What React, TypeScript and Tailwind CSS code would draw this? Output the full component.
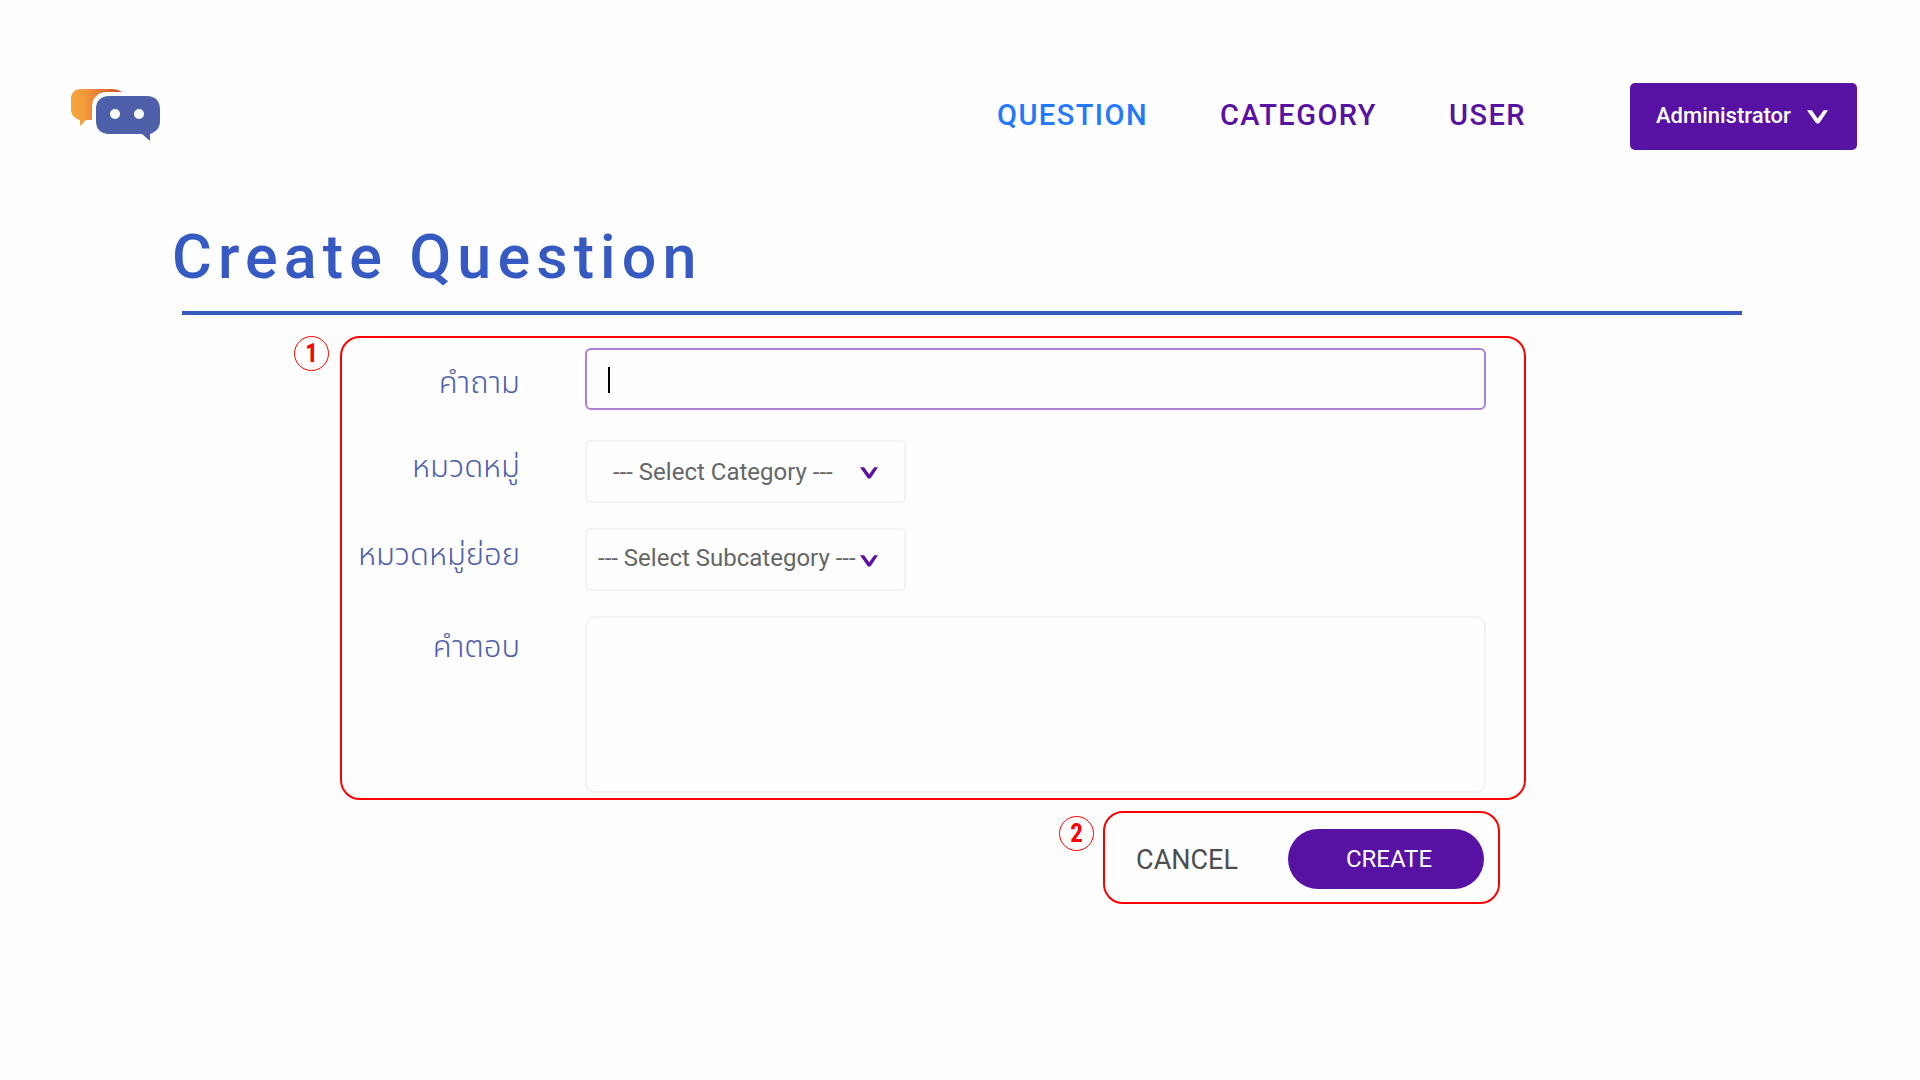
import type { ReactNode } from 'react';

function Logo() {
  return (
    <svg viewBox="0 0 90 54" className="h-[54px] w-[90px]" role="img" aria-label="Chatbot">
      <defs>
        <linearGradient id="bubble" x1="0" x2="1" y1="0" y2="0">
          <stop offset="0" stopColor="#f8a53c" />
          <stop offset="0.25" stopColor="#f39c3b" />
          <stop offset="0.75" stopColor="#e0682f" />
          <stop offset="1" stopColor="#d4502c" />
        </linearGradient>
      </defs>
      <path
        fill="url(#bubble)"
        d="M10 0H41C45 0 48 1 51 3H36C27 3 21 9 21 18V31H15L9 37V31C3 29 0 26 0 20V10C0 4 4 0 10 0Z"
      />
      <path
        fill="#4f60ab"
        d="M38 7H76C84 7 89 12 89 20V32C89 39 85 43 79 45V52L71 45H38C30 45 25 40 25 32V20C25 12 30 7 38 7Z"
      />
      <circle cx="44" cy="25" r="5" fill="#fff" />
      <circle cx="68" cy="25" r="5" fill="#fff" />
    </svg>
  );
}

function Chevron({ className }: { className: string }) {
  return (
    <svg viewBox="0 0 20 13" className={className} fill="currentColor" aria-hidden="true">
      <path d="M0 0H4.6L10.2 8L15.8 0H20L12.2 11.8Q10.2 14 8.2 11.8Z" />
    </svg>
  );
}

function Badge({ children }: { children: ReactNode }) {
  return (
    <span className="flex size-[35px] shrink-0 items-center justify-center rounded-full border border-[#ff0000] font-['Roboto_Condensed',Roboto,sans-serif] text-[25px] leading-none font-bold text-[#ff0000]">
      {children}
    </span>
  );
}

const label =
  "w-[178px] shrink-0 text-right font-['Noto_Sans_Thai','Noto_Sans',sans-serif] text-[31px] leading-10 font-light whitespace-nowrap text-[#4f60ab]";

function Select({ id, text, pad }: { id: string; text: string; pad: string }) {
  return (
    <div className="relative w-[321px]">
      <select
        id={id}
        className={`h-[63px] w-full appearance-none rounded-[5px] border-2 border-[#f2f2f2] bg-transparent text-[24px] text-[#666] ${pad}`}
      >
        <option>{text}</option>
      </select>
      <Chevron className="pointer-events-none absolute top-[27px] right-7 h-3 w-[18px] text-[#5712a3]" />
    </div>
  );
}

export default function App() {
  return (
    <div className="min-h-screen bg-[#fefefe] font-[Roboto,sans-serif]">
      <header className="flex items-start pt-[83px] pr-[63px] pl-[71px]">
        <a href="#" className="pt-1.5">
          <Logo />
        </a>
        <nav className="ml-auto flex gap-[72px] pt-3 text-[29px] leading-10 font-medium tracking-wider text-[#5712a3]">
          <a href="#question" className="text-[#2378fb]">QUESTION</a>
          <a href="#category">CATEGORY</a>
          <a href="#user">USER</a>
        </nav>
        <button className="ml-[104px] flex h-[67px] w-[227px] items-center rounded-[5px] bg-[#5712a3] pb-0.5 pl-[26px] text-[22px] font-medium text-white">
          Administrator
          <Chevron className="mt-0.5 ml-4 h-[14px] w-[21px]" />
        </button>
      </header>

      <main className="pt-[67px] pr-[178px] pl-[182px]">
        <h1 className="-ml-2.5 text-[61px] leading-20 font-medium tracking-widest text-[#375ac2]">
          Create Question
        </h1>
        <div className="mt-3.5 h-1 bg-[#375ac2]" />

        <form className="mt-[21px] mr-[216px] ml-[112px]">
          <div className="flex items-start gap-[11px]">
            <Badge>1</Badge>
            <div className="flex min-w-0 flex-1 flex-col rounded-[20px] border-2 border-[#ff0000] pt-2.5 pr-[38px] pb-[5px]">
              <div className="flex items-start gap-[65px]">
                <label htmlFor="question" className={`${label} pt-4`}>คำถาม</label>
                <div className="relative flex-1">
                  <input
                    id="question"
                    type="text"
                    className="h-[62px] w-full rounded-md border-2 border-[#ab80d3] bg-transparent px-6 text-[23px] outline-none"
                  />
                  <span className="pointer-events-none absolute top-[19px] left-[23px] h-[26px] w-0.5 bg-black" />
                </div>
              </div>
              <div className="mt-[30px] flex items-start gap-[65px]">
                <label htmlFor="category" className={`${label} pt-2`}>หมวดหมู่</label>
                <Select id="category" text="--- Select Category ---" pad="pl-[26px]" />
              </div>
              <div className="mt-[25px] flex items-start gap-[65px]">
                <label htmlFor="subcategory" className={`${label} pt-2`}>หมวดหมู่ย่อย</label>
                <Select id="subcategory" text="--- Select Subcategory ---" pad="pb-1 pl-[11px]" />
              </div>
              <div className="mt-[25px] flex items-start gap-[65px]">
                <label htmlFor="answer" className={`${label} pt-3`}>คำตอบ</label>
                <textarea
                  id="answer"
                  className="h-[177px] flex-1 resize-none rounded-[10px] border-2 border-[#f2f2f2] bg-transparent p-5 text-[23px] outline-none"
                />
              </div>
            </div>
          </div>

          <div className="mt-[11px] mr-[26px] flex items-start justify-end gap-[9px]">
            <div className="pt-[5px]">
              <Badge>2</Badge>
            </div>
            <div className="flex items-center rounded-[20px] border-2 border-[#ff0000] pt-4 pr-3.5 pb-[13px] pl-[31px]">
              <button type="button" className="pt-0.5 text-[27px] leading-[58px] text-[#4d4d4d]">CANCEL</button>
              <button type="submit" className="ml-[50px] h-[60px] w-[196px] rounded-full bg-[#5712a3] pl-1.5 text-2xl text-white">
                CREATE
              </button>
            </div>
          </div>
        </form>
      </main>
    </div>
  );
}
